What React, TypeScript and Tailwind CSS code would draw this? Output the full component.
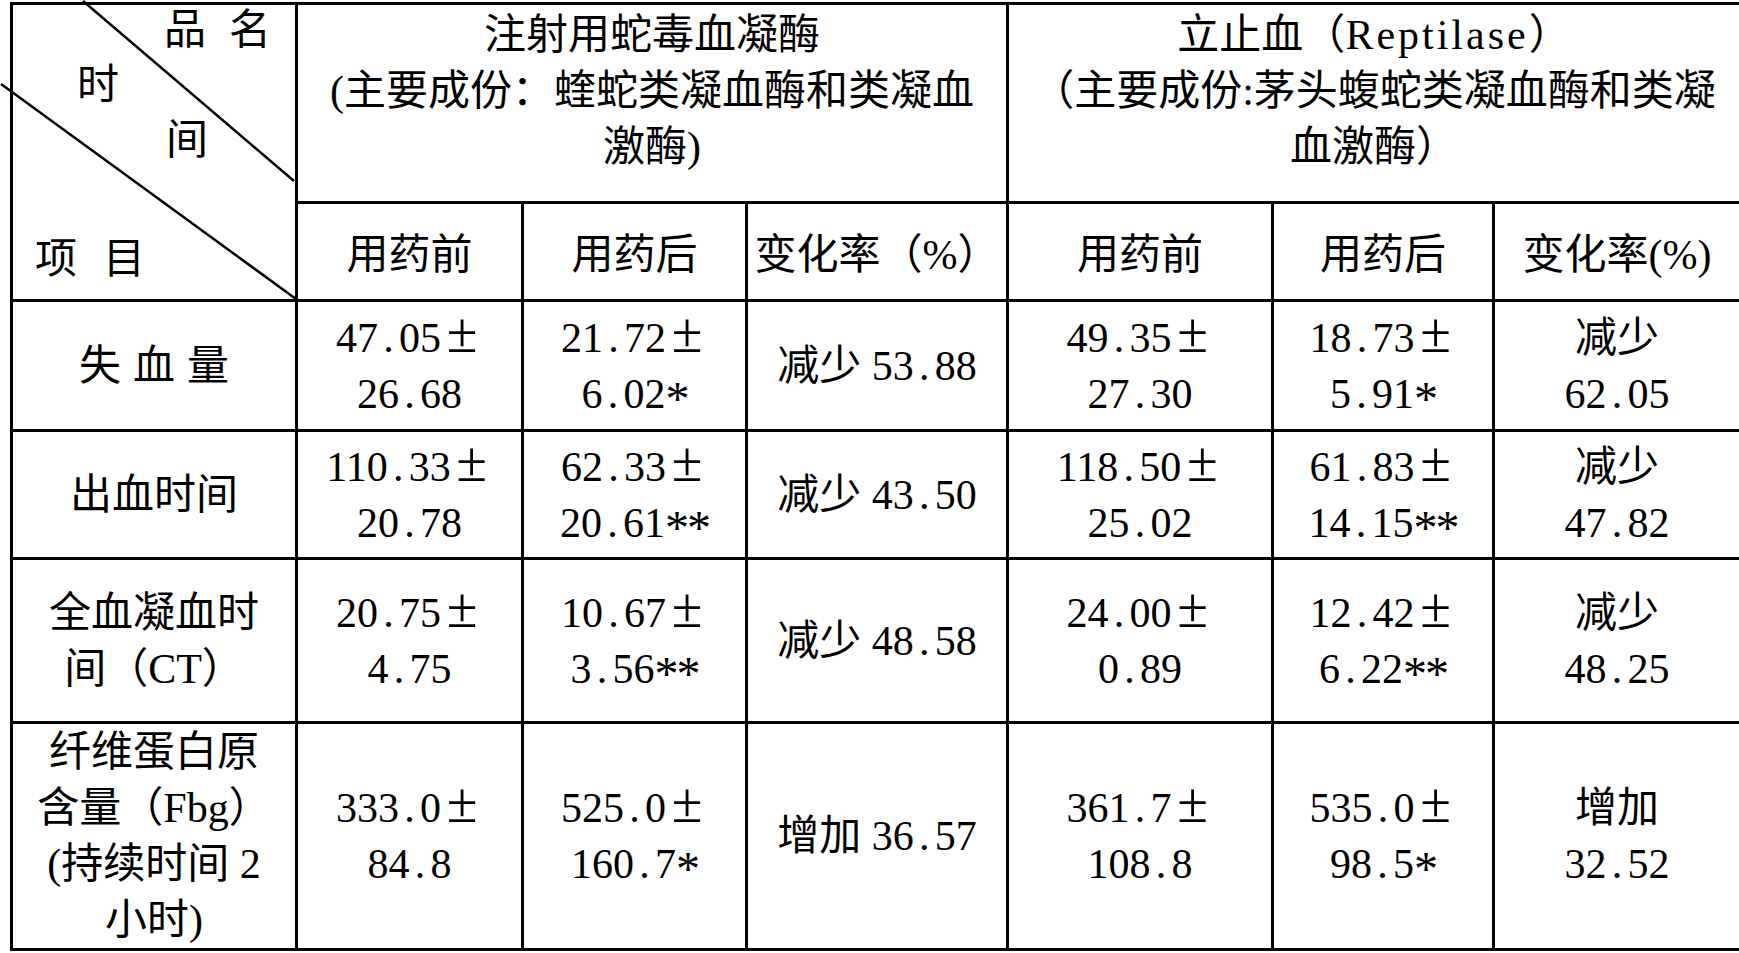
import type { ReactNode } from "react";

// numbers are set like the original SimSun table: "." takes half an em, "±" a full em,
// and the asterisks sit large at mid height
function Num({ text }: { text: string }) {
  return (
    <>
      {text.split("").map((ch, i) => {
        if (ch === "±")
          return (
            <span key={i} className="inline-block w-[42px] text-center text-[56px] leading-[42px]">
              ±
            </span>
          );
        if (ch === ".")
          return (
            <span key={i} className="inline-block w-[21px] text-center">
              .
            </span>
          );
        if (ch === "*")
          return (
            <span key={i} className="relative top-[7px] inline-block w-[22px] text-center text-[48px] leading-[42px]">
              *
            </span>
          );
        return <span key={i}>{ch}</span>;
      })}
    </>
  );
}

function Lines({ lines }: { lines: string[] }) {
  return (
    <>
      {lines.map((line, i) => (
        <div key={i} className="whitespace-nowrap">
          <Num text={line} />
        </div>
      ))}
    </>
  );
}

type Row = {
  label: ReactNode;
  height: string;
  cells: string[][];
};

const rows: Row[] = [
  {
    label: (
      <div className="whitespace-nowrap">
        失<span className="mx-[12px]">血</span>量
      </div>
    ),
    height: "h-[130px]",
    cells: [
      ["47.05±", "26.68"],
      ["21.72±", "6.02*"],
      ["减少 53.88"],
      ["49.35±", "27.30"],
      ["18.73±", "5.91*"],
      ["减少", "62.05"],
    ],
  },
  {
    label: <Lines lines={["出血时间"]} />,
    height: "h-[128px]",
    cells: [
      ["110.33±", "20.78"],
      ["62.33±", "20.61**"],
      ["减少 43.50"],
      ["118.50±", "25.02"],
      ["61.83±", "14.15**"],
      ["减少", "47.82"],
    ],
  },
  {
    label: <Lines lines={["全血凝血时", "间（CT）"]} />,
    height: "h-[164px]",
    cells: [
      ["20.75±", "4.75"],
      ["10.67±", "3.56**"],
      ["减少 48.58"],
      ["24.00±", "0.89"],
      ["12.42±", "6.22**"],
      ["减少", "48.25"],
    ],
  },
  {
    label: <Lines lines={["纤维蛋白原", "含量（Fbg）", "(持续时间 2", "小时)"]} />,
    height: "h-[225px]",
    cells: [
      ["333.0±", "84.8"],
      ["525.0±", "160.7*"],
      ["增加 36.57"],
      ["361.7±", "108.8"],
      ["535.0±", "98.5*"],
      ["增加", "32.52"],
    ],
  },
];

const cell = "border-[3px] border-black text-center align-middle p-0";

export default function App() {
  return (
    <div className="min-h-screen bg-white text-black font-['Liberation_Serif','Noto_Sans_CJK_SC',serif] text-[42px] leading-[56px]">
      <table className="ml-[10px] mt-[2px] w-[1729px] table-fixed border-collapse">
        <colgroup>
          <col className="w-[285px]" />
          <col className="w-[226px]" />
          <col className="w-[224px]" />
          <col className="w-[261px]" />
          <col className="w-[265px]" />
          <col className="w-[221px]" />
          <col className="w-[247px]" />
        </colgroup>
        <thead>
          <tr className="h-[199px]">
            <th rowSpan={2} className="relative border-[3px] border-black p-0 font-normal">
              <svg
                className="absolute left-[-12px] top-[-4px] overflow-visible"
                width="300"
                height="300"
                viewBox="0 0 300 300"
              >
                <line x1="82" y1="0" x2="293" y2="180" stroke="black" strokeWidth="2.5" />
                <line x1="0" y1="83" x2="295" y2="298" stroke="black" strokeWidth="2.5" />
              </svg>
              <span className="absolute left-[151px] top-[4px] leading-[42px]">品</span>
              <span className="absolute left-[216px] top-[4px] leading-[42px]">名</span>
              <span className="absolute left-[64px] top-[59px] leading-[42px]">时</span>
              <span className="absolute left-[153px] top-[114px] leading-[42px]">间</span>
              <span className="absolute left-[22px] top-[233px] leading-[42px]">项</span>
              <span className="absolute left-[90px] top-[233px] leading-[42px]">目</span>
            </th>
            <th colSpan={3} className="border-[3px] border-black p-0 pt-[2px] text-center align-top font-normal">
              <div className="whitespace-nowrap">注射用蛇毒血凝酶</div>
              <div className="whitespace-nowrap">(主要成份：蝰蛇类凝血酶和类凝血</div>
              <div className="whitespace-nowrap">激酶)</div>
            </th>
            <th colSpan={3} className="border-[3px] border-black p-0 pt-[2px] text-center align-top font-normal">
              <div className="whitespace-nowrap">
                立止血（<span className="tracking-[3px]">Reptilase</span>）
              </div>
              <div className="whitespace-nowrap">（主要成份:茅头蝮蛇类凝血酶和类凝</div>
              <div className="whitespace-nowrap">血激酶）</div>
            </th>
          </tr>
          <tr className="h-[98px]">
            <th className={`${cell} pt-[6px] font-normal`}>用药前</th>
            <th className={`${cell} pt-[6px] font-normal`}>用药后</th>
            <th className={`${cell} pt-[6px] font-normal`}>变化率（%）</th>
            <th className={`${cell} pt-[6px] font-normal`}>用药前</th>
            <th className={`${cell} pt-[6px] font-normal`}>用药后</th>
            <th className={`${cell} pt-[6px] font-normal`}>变化率(%)</th>
          </tr>
        </thead>
        <tbody>
          {rows.map((row, r) => (
            <tr key={r} className={row.height}>
              <td className={cell}>{row.label}</td>
              {row.cells.map((lines, c) => (
                <td key={c} className={cell}>
                  <Lines lines={lines} />
                </td>
              ))}
            </tr>
          ))}
        </tbody>
      </table>
    </div>
  );
}
